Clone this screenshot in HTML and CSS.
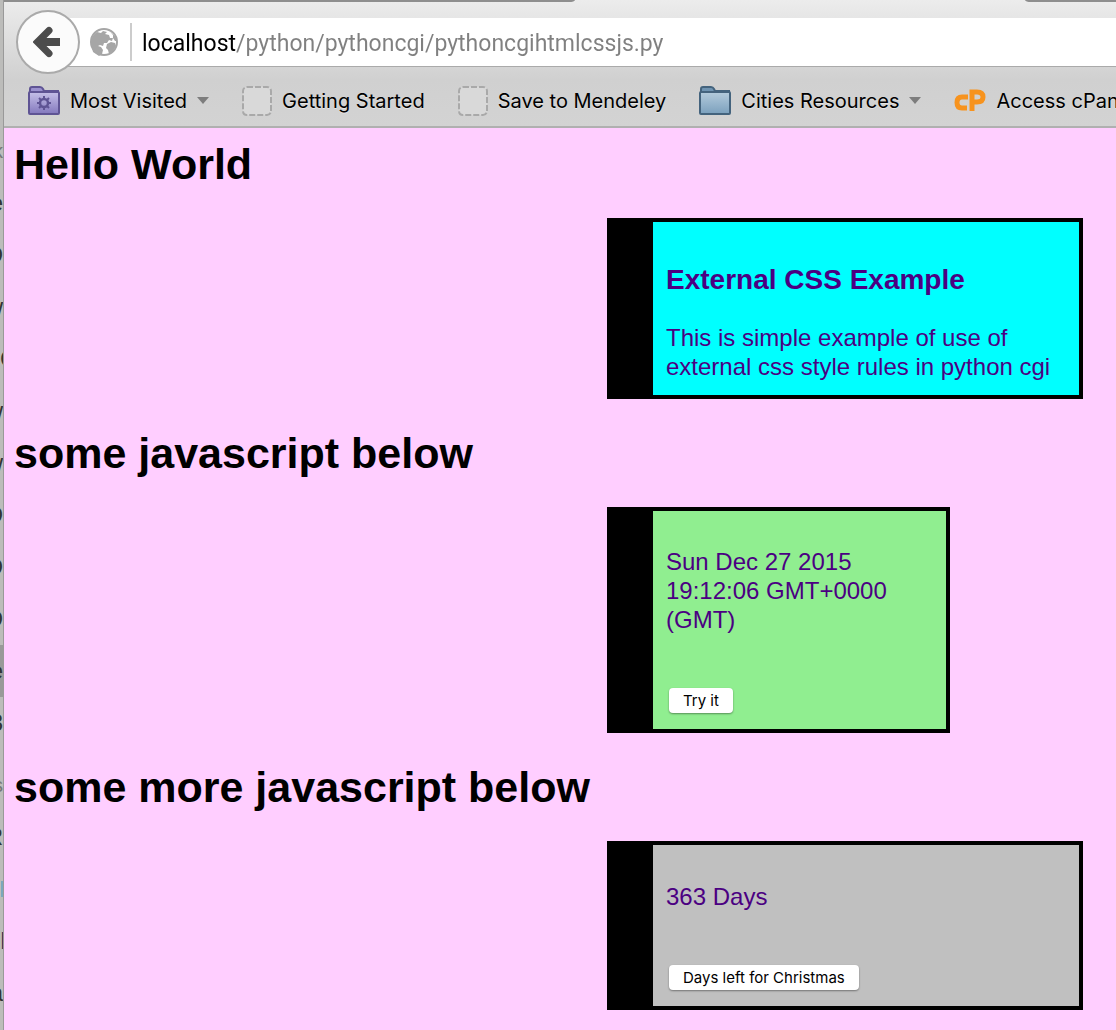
FILE: index.html
```html
<!DOCTYPE html>
<html lang="en">
<head>
<meta charset="utf-8">
<title>pythoncgihtmlcssjs.py</title>
<link rel="stylesheet" href="styles.css">
</head>
<body>
<div class="desktop">
  <div class="behind" aria-hidden="true">
    <span class="row small">k</span><span class="row">e</span><span class="row">D</span><span class="row">w</span><span class="row start">C</span><span class="row">w</span><span class="row">w</span><span class="row">D</span><span class="row">D</span><span class="row">D</span><span class="row selected">e</span><span class="row">3</span><span class="row small late">s</span><span class="row">R</span><span class="row"><i class="chip"></i></span><span class="row start dark">F</span><span class="row">a</span>
  </div>
  <div class="window">
    <header class="chrome">
      <div class="tabs"><span class="tab-left"></span><span class="tab-right"></span></div>
      <nav class="navbar" aria-label="Navigation">
        <button class="back" type="button" aria-label="Back">
          <svg width="30" height="32" viewBox="0 0 30 32" fill="none" stroke="#4c4c4c" stroke-width="7"><path stroke-linecap="round" d="M16 4.500 4.500 16 16 27.500"/><path stroke-width="8" d="M6 16h21"/></svg>
        </button>
        <div class="location">
          <svg class="globe" width="28" height="28" viewBox="0 0 28 28"><circle cx="14" cy="14" r="13" fill="#fff" stroke="#a6a6a6" stroke-width="2"/><path fill="#a6a6a6" d="M1 14Q2 7 7 4l4 1 2-2 4 1-2 2 4 1 1 3 3 0-1 3-3-1-2 3-3 0-1 3-3-1-2 1 3 1 2 3-1 4-3 2-6-4zM20 4l5 4 2 5-2 0-2-3 0-3zM17 16l4-2 4 1 1 3-3 5-4 3-1-4-2-2z"/></svg>
          <input class="url" type="text" aria-label="Address" value="localhost/python/pythoncgi/pythoncgihtmlcssjs.py">
        </div>
      </nav>
      <nav class="bookmarks" aria-label="Bookmarks">
        <button class="mark" type="button">
          <svg width="32" height="30" viewBox="0 0 32 30"><defs><linearGradient id="violet" x2="0" y2="1"><stop stop-color="#c5bfe8"/><stop offset="1" stop-color="#8378bd"/></linearGradient></defs><path d="M2 6V3q0-2 2-2h8q2 0 3 2l1 2h14v5H2z" fill="#9a90ce" stroke="#5f5494" stroke-width="2"/><rect x="1" y="6" width="30" height="22" rx="1" fill="url(#violet)" stroke="#5f5494" stroke-width="2"/><g fill="none" stroke="#5f5494"><circle cx="16" cy="17" r="4" stroke-width="2.500"/><path stroke-width="2" d="M16 10v3M16 21v3M9 17h3M20 17h3M11 12l2 2M19 20l2 2M11 22l2-2M19 14l2-2"/></g></svg>
          <span>Most Visited</span><i class="caret"></i>
        </button>
        <a class="mark" href="#"><svg width="30" height="30" viewBox="0 0 30 30"><rect x="1" y="1" width="28" height="28" rx="4" fill="#d9d9d9" stroke="#a9a9a9" stroke-width="2" stroke-dasharray="6 2"/></svg><span>Getting Started</span></a>
        <a class="mark" href="#"><svg width="30" height="30" viewBox="0 0 30 30"><rect x="1" y="1" width="28" height="28" rx="4" fill="#d9d9d9" stroke="#a9a9a9" stroke-width="2" stroke-dasharray="6 2"/></svg><span>Save to Mendeley</span></a>
        <button class="mark" type="button">
          <svg width="32" height="30" viewBox="0 0 32 30"><defs><linearGradient id="blue" x2="0" y2="1"><stop stop-color="#b4cbdc"/><stop offset="1" stop-color="#7ba0bd"/></linearGradient></defs><path d="M2 6V3q0-2 2-2h8q2 0 3 2l1 2h14v5H2z" fill="#6f93b1" stroke="#44637d" stroke-width="2"/><rect x="1" y="6" width="30" height="22" rx="1" fill="url(#blue)" stroke="#44637d" stroke-width="2"/></svg>
          <span>Cities Resources</span><i class="caret"></i>
        </button>
        <a class="mark" href="#"><svg width="32" height="30" viewBox="0 0 32 30" fill="none" stroke="#f7931e" stroke-width="5"><path d="M14 11H8q-5 0-5 5.500T8 22h5"/><path d="M18 25V6h5q6 0 6 5t-6 5h-5"/></svg><span>Access cPan</span></a>
      </nav>
    </header>
    <main class="page">
      <h1>Hello World</h1>
      <section class="box cyan">
        <h3>External CSS Example</h3>
        <p>This is simple example of use of external css style rules in python cgi</p>
      </section>
      <h1>some javascript below</h1>
      <section class="box script green">
        <p>Sun Dec 27 2015 19:12:06 GMT+0000 (GMT)</p>
        <button class="push" type="button">Try it</button>
      </section>
      <h1>some more javascript below</h1>
      <section class="box script silver">
        <p>363 Days</p>
        <button class="push" type="button">Days left for Christmas</button>
      </section>
    </main>
  </div>
</div>
</body>
</html>
```
FILE: styles.css
```css
* { box-sizing: border-box; }
body { margin: 0; font-family: "Liberation Sans", Arial, sans-serif; }
.desktop { display: flex; min-height: 100vh; overflow: hidden; background: #ffceff; }

/* sliver of the window behind */
.behind { flex: none; width: 4px; overflow: hidden; padding-top: 125px; background: #bcbcba; border-right: 1px solid #999; font-size: 24px; color: #333; }
.row { display: flex; align-items: center; justify-content: flex-end; height: 52px; }
.start { justify-content: flex-start; }
.small { font-size: 20px; color: #777; }
.late { margin-top: 10px; }
.selected { background: #999; }
.dark { color: #335; }
.chip { width: 2px; height: 16px; background: #7ba7bd; }

.window { flex: 1; min-width: 0; }
.chrome { height: 128px; background: linear-gradient(#ececec, #d0d0d0 80px, #d3d3d3); border-bottom: 2px solid #b0b0b0; overflow: hidden; }
.tabs { display: flex; justify-content: space-between; height: 10px; }
.tab-left, .tab-right { height: 2px; background: #8e8e8e; }
.tab-left { width: 571px; border-bottom-right-radius: 6px 2px; }
.tab-right { width: 91px; border-bottom-left-radius: 6px 2px; }

.navbar { display: flex; align-items: center; height: 64px; padding-left: 12px; }
.back { position: relative; z-index: 1; flex: none; display: grid; place-items: center; width: 64px; height: 64px; padding: 0; border: 2px solid #aaa; border-radius: 50%; background: #fbfbfb; }
.location { flex: 1; display: flex; align-items: center; gap: 12px; height: 49px; margin-left: -16px; padding-left: 26px; background: #fff; border-bottom: 1px solid #aaa; }
.globe { flex: none; }
/* the host name is darker than the path */
.url { flex: 1; min-width: 0; height: 38px; padding: 4px 0 0 10px; border: 0; border-left: 2px solid #ccc; outline: 0; font: 23px Roboto, sans-serif; color: transparent; caret-color: #000; background: linear-gradient(90deg, #000 104px, #808080 104px); -webkit-background-clip: text; background-clip: text; }

.bookmarks { display: flex; align-items: center; gap: 33px; height: 53px; padding-left: 24px; }
.mark { flex: none; display: flex; align-items: center; gap: 10px; padding: 0; border: 0; background: none; font: 20px Inter, sans-serif; color: #000; text-decoration: none; white-space: nowrap; text-shadow: 0 1px #e4e4e4; }
.caret { border: 6px solid transparent; border-top: 7px solid #7d7d7d; border-bottom: 0; }

.page { padding: 12px 10px 20px; }
h1 { margin: 30px 0; font-size: 43px; line-height: 48px; }
h1:first-child { margin-top: 0; }
.box { margin: 0 23px 0 593px; padding: 42px 13px 14px; border: 4px solid #000; border-left-width: 46px; color: #4b0082; font-size: 24px; line-height: 29px; }
.box h3 { margin: 0 0 27px; font-size: 28px; line-height: 32px; }
.box p { margin: 0; }
.cyan { background: #0ff; }
.script { padding-top: 36px; padding-bottom: 16px; }
.green { max-width: 343px; background: #90ee90; }
.silver { padding-top: 37px; background: #c0c0c0; }
.push { display: block; margin: 54px 0 0 3px; height: 25px; padding: 0 14px; border: 0; border-radius: 4px; background: #fff; box-shadow: 0 1px 2px #0006; font: 15px Inter, sans-serif; color: #000; }
```
